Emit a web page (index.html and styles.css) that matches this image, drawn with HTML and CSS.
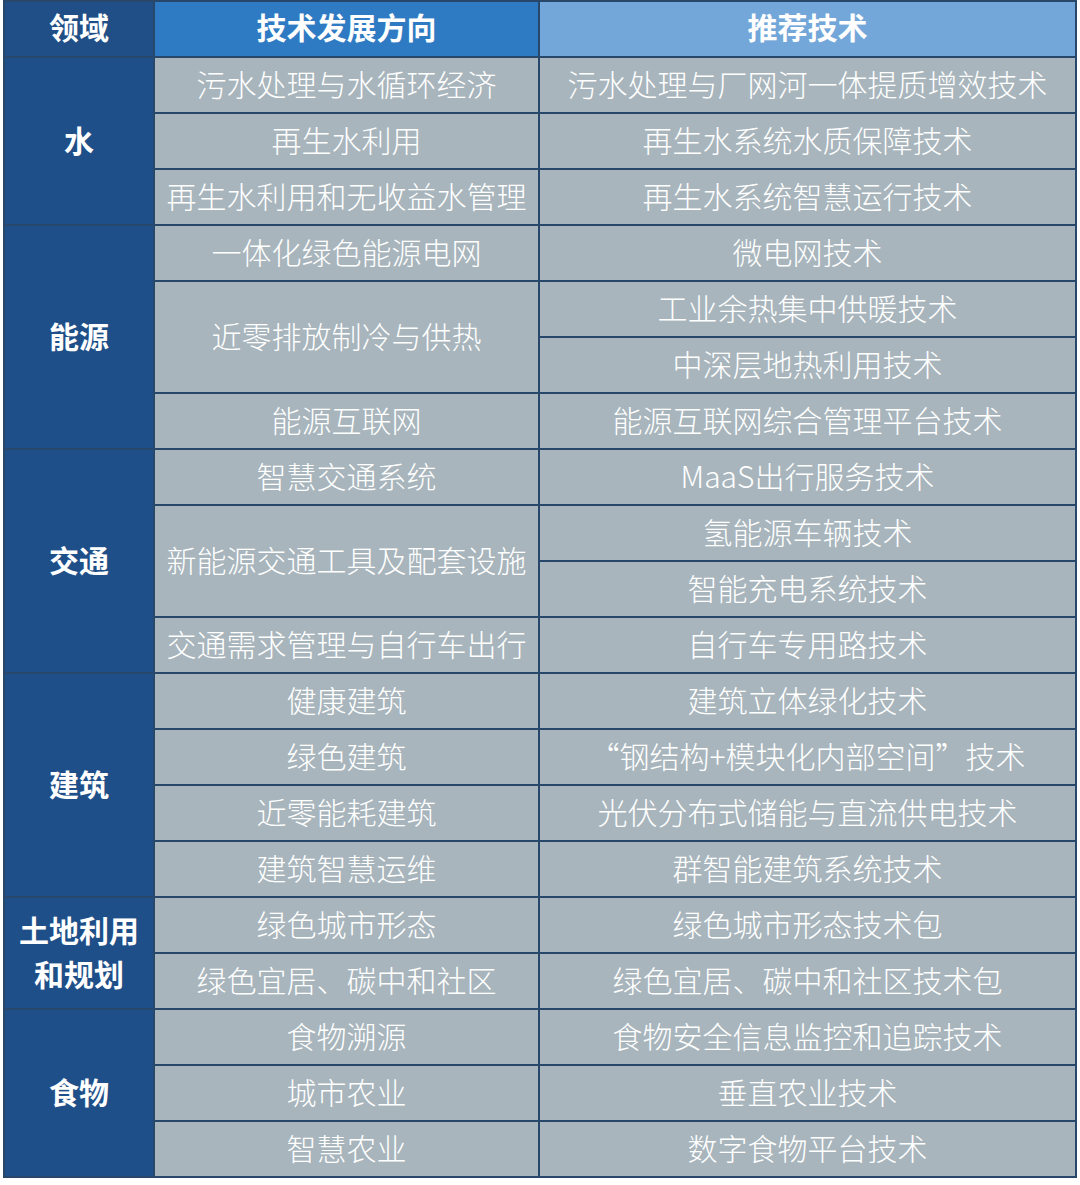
FILE: index.html
```html
<!DOCTYPE html>
<html lang="zh">
<head>
<meta charset="utf-8">
<link rel="stylesheet" href="styles.css">
</head>
<body>
<div class="table">
  <div class="h h1" style="grid-row:1">领域</div>
  <div class="h h2" style="grid-row:1">技术发展方向</div>
  <div class="h h3" style="grid-row:1">推荐技术</div>

  <div class="cat" style="grid-row:2 / span 3">水</div>
  <div class="c2" style="grid-row:2">污水处理与水循环经济</div>
  <div class="c3" style="grid-row:2">污水处理与厂网河一体提质增效技术</div>
  <div class="c2" style="grid-row:3">再生水利用</div>
  <div class="c3" style="grid-row:3">再生水系统水质保障技术</div>
  <div class="c2" style="grid-row:4">再生水利用和无收益水管理</div>
  <div class="c3" style="grid-row:4">再生水系统智慧运行技术</div>

  <div class="cat" style="grid-row:5 / span 4">能源</div>
  <div class="c2" style="grid-row:5">一体化绿色能源电网</div>
  <div class="c3" style="grid-row:5">微电网技术</div>
  <div class="c2" style="grid-row:6 / span 2">近零排放制冷与供热</div>
  <div class="c3" style="grid-row:6">工业余热集中供暖技术</div>
  <div class="c3" style="grid-row:7">中深层地热利用技术</div>
  <div class="c2" style="grid-row:8">能源互联网</div>
  <div class="c3" style="grid-row:8">能源互联网综合管理平台技术</div>

  <div class="cat" style="grid-row:9 / span 4">交通</div>
  <div class="c2" style="grid-row:9">智慧交通系统</div>
  <div class="c3" style="grid-row:9">MaaS出行服务技术</div>
  <div class="c2" style="grid-row:10 / span 2">新能源交通工具及配套设施</div>
  <div class="c3" style="grid-row:10">氢能源车辆技术</div>
  <div class="c3" style="grid-row:11">智能充电系统技术</div>
  <div class="c2" style="grid-row:12">交通需求管理与自行车出行</div>
  <div class="c3" style="grid-row:12">自行车专用路技术</div>

  <div class="cat" style="grid-row:13 / span 4">建筑</div>
  <div class="c2" style="grid-row:13">健康建筑</div>
  <div class="c3" style="grid-row:13">建筑立体绿化技术</div>
  <div class="c2" style="grid-row:14">绿色建筑</div>
  <div class="c3" style="grid-row:14">“钢结构+模块化内部空间”技术</div>
  <div class="c2" style="grid-row:15">近零能耗建筑</div>
  <div class="c3" style="grid-row:15">光伏分布式储能与直流供电技术</div>
  <div class="c2" style="grid-row:16">建筑智慧运维</div>
  <div class="c3" style="grid-row:16">群智能建筑系统技术</div>

  <div class="cat two" style="grid-row:17 / span 2">土地利用<br>和规划</div>
  <div class="c2" style="grid-row:17">绿色城市形态</div>
  <div class="c3" style="grid-row:17">绿色城市形态技术包</div>
  <div class="c2" style="grid-row:18">绿色宜居、碳中和社区</div>
  <div class="c3" style="grid-row:18">绿色宜居、碳中和社区技术包</div>

  <div class="cat" style="grid-row:19 / span 3">食物</div>
  <div class="c2" style="grid-row:19">食物溯源</div>
  <div class="c3" style="grid-row:19">食物安全信息监控和追踪技术</div>
  <div class="c2" style="grid-row:20">城市农业</div>
  <div class="c3" style="grid-row:20">垂直农业技术</div>
  <div class="c2" style="grid-row:21">智慧农业</div>
  <div class="c3" style="grid-row:21">数字食物平台技术</div>
</div>
</body>
</html>
```

FILE: styles.css
```css
html, body {
  margin: 0;
  padding: 0;
  background: #ffffff;
}

body {
  font-family: "Noto Sans CJK SC", "Noto Sans", sans-serif;
}

.table {
  margin-left: 3px;
  width: 1070px;
  display: grid;
  grid-template-columns: 148px 383px 535px;
  grid-template-rows: repeat(21, 54px);
  gap: 2px;
  padding: 2px;
  background: #27486a;
}

.table > div {
  display: flex;
  align-items: center;
  justify-content: center;
  text-align: center;
  color: #ffffff;
  font-size: 30px;
  line-height: 1;
  white-space: nowrap;
}

.h {
  font-weight: 700;
  padding-bottom: 6px;
}

.h1 {
  grid-column: 1;
  background: #1f4f86;
}

.h2 {
  grid-column: 2;
  background: #2f7bc3;
}

.h3 {
  grid-column: 3;
  background: #74a7d9;
}

.cat {
  grid-column: 1;
  background: #1f4f88;
  font-weight: 700;
  padding-bottom: 4px;
}

.cat.two {
  line-height: 44px !important;
}

.c2 {
  grid-column: 2;
  background: #a8b5bc;
  font-weight: 300;
  padding-bottom: 5px;
}

.c3 {
  grid-column: 3;
  background: #a8b5bc;
  font-weight: 300;
  padding-bottom: 5px;
}
```
